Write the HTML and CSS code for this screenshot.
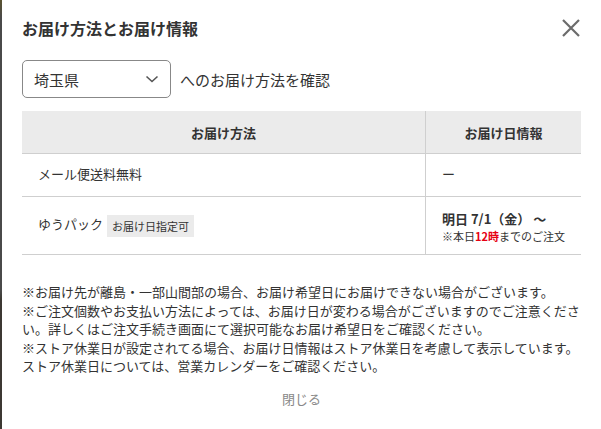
FILE: index.html
```html
<!DOCTYPE html>
<html lang="ja">
<head>
    <meta charset="UTF-8">
    <meta name="viewport" content="width=device-width, initial-scale=1.0">
    <title>お届け方法とお届け情報</title>
    <link rel="stylesheet" href="styles.css">
</head>
<body>
    <div class="modal">
        <div class="modal-head">
            <h1>お届け方法とお届け情報</h1>
            <button class="close-btn" type="button" aria-label="閉じる">
                <svg width="20" height="20" viewBox="0 0 20 20">
                    <path d="M2 2 L18 18 M18 2 L2 18" stroke="#6b6b6b" stroke-width="2.2" fill="none"/>
                </svg>
            </button>
        </div>

        <div class="region">
            <div class="select">
                <span>埼玉県</span>
                <svg width="14" height="10" viewBox="0 0 14 10">
                    <path d="M1.5 2.5 L7 7.5 L12.5 2.5" stroke="#555" stroke-width="1.6" fill="none"/>
                </svg>
            </div>
            <span class="region-label">へのお届け方法を確認</span>
        </div>

        <table class="ship-table">
            <thead>
                <tr>
                    <th class="col-method">お届け方法</th>
                    <th class="col-date">お届け日情報</th>
                </tr>
            </thead>
            <tbody>
                <tr class="row-mail">
                    <td>メール便送料無料</td>
                    <td>ー</td>
                </tr>
                <tr class="row-pack">
                    <td>ゆうパック <span class="tag">お届け日指定可</span></td>
                    <td>
                        <div class="date-main">明日 7/1（金） ～</div>
                        <div class="date-note">※本日<strong>12時</strong>までのご注文</div>
                    </td>
                </tr>
            </tbody>
        </table>

        <div class="notes">
            <p>※お届け先が離島・一部山間部の場合、お届け希望日にお届けできない場合がございます。</p>
            <p>※ご注文個数やお支払い方法によっては、お届け日が変わる場合がございますのでご注意ください。詳しくはご注文手続き画面にて選択可能なお届け希望日をご確認ください。</p>
            <p>※ストア休業日が設定されてる場合、お届け日情報はストア休業日を考慮して表示しています。ストア休業日については、営業カレンダーをご確認ください。</p>
        </div>

        <div class="modal-foot">
            <a class="close-link" href="#">閉じる</a>
        </div>
    </div>
</body>
</html>
```

FILE: styles.css
```css
body {
    margin: 0;
    padding: 0;
    background: linear-gradient(to bottom, #5a5330 0px, #4a4a4a 18px, #4a4a4a 290px, #3c3832 300px, #3c3832 100%);
    font-family: "Noto Sans CJK JP", "Noto Sans", sans-serif;
    color: #333;
    overflow: hidden;
}

.modal {
    margin-left: 2px;
    min-height: 429px;
    background: #fff;
    padding: 16px 20px 0;
    box-sizing: border-box;
}

.modal-head {
    display: flex;
    justify-content: space-between;
    align-items: center;
    height: 24px;
}

.modal-head h1 {
    margin: 0;
    font-size: 16px;
    font-weight: bold;
    line-height: 24px;
    color: #333;
}

.close-btn {
    border: none;
    background: none;
    padding: 0;
    width: 20px;
    height: 20px;
    cursor: pointer;
}

.region {
    display: flex;
    align-items: center;
    margin-top: 20px;
    gap: 9px;
}

.select {
    display: flex;
    justify-content: space-between;
    align-items: center;
    width: 149px;
    height: 38px;
    box-sizing: border-box;
    border: 1px solid #888;
    border-radius: 5px;
    padding: 0 11px 0 11px;
    font-size: 15px;
}

.region-label {
    font-size: 15px;
}

.ship-table {
    margin-top: 13px;
    width: 100%;
    border-collapse: collapse;
    font-size: 13px;
}

.ship-table th {
    height: 42px;
    background: #ebebeb;
    font-weight: bold;
    text-align: center;
    border-bottom: 1px solid #cfcfcf;
    padding: 0;
}

.ship-table td {
    border-bottom: 1px solid #cfcfcf;
    padding: 0 16px;
    text-align: left;
}

.ship-table .col-method {
    width: 403px;
}

.ship-table th + th,
.ship-table td + td {
    border-left: 1px solid #cfcfcf;
}

.row-mail td {
    height: 39px;
    padding-bottom: 3px;
}

.row-pack td {
    height: 57px;
}

.tag {
    display: inline-block;
    background: #ebebeb;
    font-size: 11px;
    line-height: 16px;
    padding: 3px 5px;
    margin-left: 1px;
    vertical-align: middle;
}

.date-main {
    font-weight: bold;
    line-height: 18px;
    margin-top: 2px;
}

.date-note {
    font-size: 11px;
    line-height: 16px;
}

.date-note strong {
    color: #e60012;
}

.notes {
    margin-top: 28px;
    font-size: 13px;
    line-height: 18.5px;
}

.notes p {
    margin: 0;
}

.modal-foot {
    text-align: center;
    margin-top: 9px;
}

.close-link {
    font-size: 13px;
    line-height: 18px;
    color: #888;
    text-decoration: none;
}
```
